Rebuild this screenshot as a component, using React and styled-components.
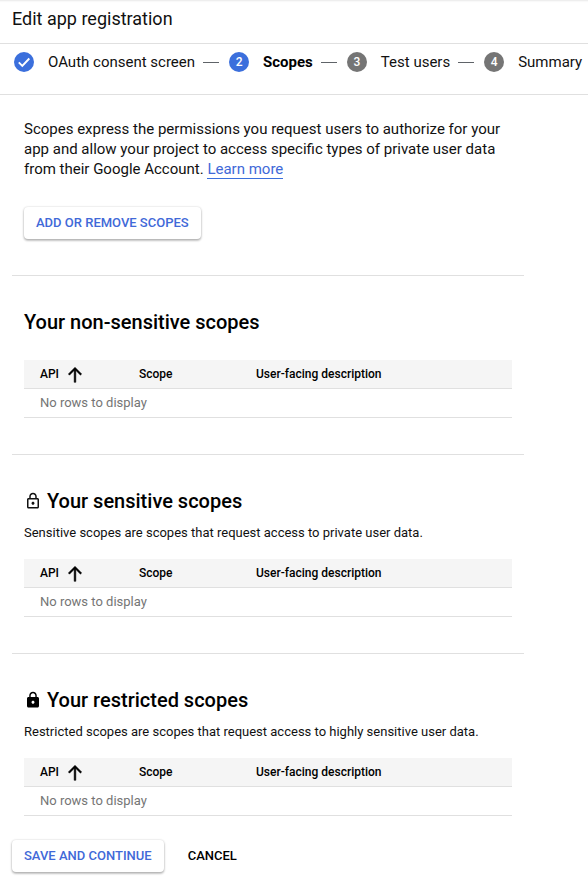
import React from 'react';
import styled, { createGlobalStyle } from 'styled-components';

const GlobalStyle = createGlobalStyle`
  html, body { margin: 0; padding: 0; background: #fff; }
  body { font-family: Roboto, "Liberation Sans", sans-serif; color: #111; }
`;

const Page = styled.div`
  width: 588px;
  height: 881px;
  overflow: hidden;
  background: #fff;
`;

const Header = styled.header`
  height: 44px;
  box-sizing: border-box;
  padding: 0 12px 6px;
  display: flex;
  align-items: center;
  border-bottom: 1px solid #e0e0e0;
  box-shadow: inset 0 3px 2px -2px #e8e8e8;
`;

const Title = styled.h1`
  margin: 0;
  font-size: 18px;
  font-weight: 400;
  color: #111;
`;

const Stepper = styled.nav`
  height: 51px;
  box-sizing: border-box;
  padding: 8px 0 0 14px;
  display: flex;
  align-items: flex-start;
  border-bottom: 1px solid #e0e0e0;
  white-space: nowrap;
`;

const StepCircle = styled.span`
  flex: none;
  width: 20px;
  height: 20px;
  border-radius: 50%;
  background: ${p => (p.$active ? '#3b6fdc' : '#757575')};
  color: #fff;
  font-size: 12px;
  font-weight: 500;
  display: flex;
  align-items: center;
  justify-content: center;
`;

const StepLabel = styled.span`
  margin-left: 14px;
  font-size: 15px;
  line-height: 20px;
  font-weight: ${p => (p.$active ? 700 : 400)};
  color: ${p => (p.$active ? '#000' : '#111')};
`;

const StepDash = styled.span`
  flex: none;
  width: 16px;
  height: 1px;
  margin: 10px 10px 0 8px;
  background: #5f6368;
`;

const Main = styled.main`
  width: 536px;
  box-sizing: border-box;
  padding: 24px 12px 0;
`;

const Intro = styled.p`
  margin: 0 12px 28px;
  width: 484px;
  font-size: 15px;
  line-height: 20px;
  color: #111;
`;

const Link = styled.a`
  color: #4169d8;
  text-decoration: none;
  border-bottom: 1px solid #3b6fdc;
`;

const RaisedButton = styled.button`
  display: block;
  height: 32px;
  margin-left: ${p => p.$inset || 0}px;
  padding: 0 12px 2px;
  border: 0;
  border-radius: 4px;
  background: #fff;
  color: #4169d8;
  font-family: inherit;
  font-size: 13px;
  font-weight: 500;
  text-transform: uppercase;
  box-shadow: 0 1px 3px rgba(0, 0, 0, 0.2), 0 2px 2px rgba(0, 0, 0, 0.14), 0 0 2px rgba(0, 0, 0, 0.12);
`;

const Divider = styled.hr`
  margin: ${p => p.$top}px 0 0;
  border: 0;
  border-top: 1px solid #e0e0e0;
`;

const Section = styled.section`
  padding: ${p => p.$top}px 12px 0;
`;

const Heading = styled.h2`
  margin: 0;
  height: 24px;
  display: flex;
  align-items: center;
  gap: 5px;
  font-size: 20px;
  line-height: 24px;
  font-weight: 500;
  color: #000;
`;

const Note = styled.p`
  margin: 10px 0 0;
  font-size: 13px;
  line-height: 20px;
  color: #111;
`;

const Table = styled.div`
  margin-top: ${p => p.$top}px;
  border-bottom: 1px solid #e0e0e0;
`;

const HeadRow = styled.div`
  height: 29px;
  padding-bottom: 1px;
  display: grid;
  grid-template-columns: 99px 117px 1fr;
  align-items: center;
  background: #f5f5f5;
  border-bottom: 1px solid #e0e0e0;
  box-sizing: border-box;
`;

const HeadCell = styled.div`
  padding-left: 16px;
  display: flex;
  align-items: center;
  gap: 6px;
  font-size: 12px;
  font-weight: 500;
  color: #000;
`;

const EmptyRow = styled.div`
  height: 28px;
  box-sizing: border-box;
  padding: 0 16px 2px;
  display: flex;
  align-items: center;
  font-size: 13px;
  color: #757575;
`;

const Actions = styled.div`
  margin-top: 24px;
  display: flex;
  align-items: center;
`;

const TextButton = styled.button`
  height: 32px;
  margin-left: 12px;
  padding: 0 12px 2px;
  border: 0;
  background: none;
  color: #000;
  font-family: inherit;
  font-size: 13px;
  font-weight: 500;
  text-transform: uppercase;
`;

const CheckIcon = () => (
  <svg width="20" height="20" viewBox="0 0 20 20" style={{ flex: 'none' }}>
    <circle cx="10" cy="10" r="10" fill="#3b6fdc" />
    <path d="M4.8 10.4l3.5 3.5 7-7.4" fill="none" stroke="#fff" strokeWidth="1.9" />
  </svg>
);

const ArrowUp = () => (
  <svg width="20" height="20" viewBox="0 0 24 24" fill="#000" stroke="#000" strokeWidth="0.6">
    <path d="M4 12l1.41 1.41L11 7.83V22h2V7.83l5.58 5.59L20 12l-8-8-8 8z" />
  </svg>
);

const LockOutline = () => (
  <svg width="18" height="18" viewBox="0 0 24 24" fill="#111">
    <path d="M18 8h-1V6c0-2.76-2.24-5-5-5S7 3.24 7 6v2H6c-1.1 0-2 .9-2 2v10c0 1.1.9 2 2 2h12c1.1 0 2-.9 2-2V10c0-1.1-.9-2-2-2zM9 6c0-1.66 1.34-3 3-3s3 1.34 3 3v2H9V6zm9 14H6V10h12v10zm-6-3c1.1 0 2-.9 2-2s-.9-2-2-2-2 .9-2 2 .9 2 2 2z" />
  </svg>
);

const LockFilled = () => (
  <svg width="18" height="18" viewBox="0 0 24 24" fill="#000">
    <path d="M18 8h-1V6c0-2.76-2.24-5-5-5S7 3.24 7 6v2H6c-1.1 0-2 .9-2 2v10c0 1.1.9 2 2 2h12c1.1 0 2-.9 2-2V10c0-1.1-.9-2-2-2zm-6 9c-1.1 0-2-.9-2-2s.9-2 2-2 2 .9 2 2-.9 2-2 2zm3.1-9H8.9V6c0-1.71 1.39-3.1 3.1-3.1s3.1 1.39 3.1 3.1v2z" />
  </svg>
);

const ScopeTable = ({ top }) => (
  <Table $top={top}>
    <HeadRow>
      <HeadCell>API <ArrowUp /></HeadCell>
      <HeadCell>Scope</HeadCell>
      <HeadCell>User-facing description</HeadCell>
    </HeadRow>
    <EmptyRow>No rows to display</EmptyRow>
  </Table>
);

export default function App() {
  return (
    <Page>
      <GlobalStyle />
      <Header>
        <Title>Edit app registration</Title>
      </Header>
      <Stepper>
        <CheckIcon />
        <StepLabel>OAuth consent screen</StepLabel>
        <StepDash />
        <StepCircle $active>2</StepCircle>
        <StepLabel $active>Scopes</StepLabel>
        <StepDash />
        <StepCircle>3</StepCircle>
        <StepLabel>Test users</StepLabel>
        <StepDash />
        <StepCircle>4</StepCircle>
        <StepLabel>Summary</StepLabel>
      </Stepper>
      <Main>
        <Intro>
          Scopes express the permissions you request users to authorize for your app and allow your
          project to access specific types of private user data from their Google Account.{' '}
          <Link>Learn more</Link>
        </Intro>
        <RaisedButton $inset={12}>Add or remove scopes</RaisedButton>
        <Divider $top={36} />
        <Section $top={34}>
          <Heading>Your non-sensitive scopes</Heading>
          <ScopeTable top={26} />
        </Section>
        <Divider $top={36} />
        <Section $top={34}>
          <Heading><LockOutline />Your sensitive scopes</Heading>
          <Note>Sensitive scopes are scopes that request access to private user data.</Note>
          <ScopeTable top={16} />
        </Section>
        <Divider $top={36} />
        <Section $top={34}>
          <Heading><LockFilled />Your restricted scopes</Heading>
          <Note>Restricted scopes are scopes that request access to highly sensitive user data.</Note>
          <ScopeTable top={16} />
        </Section>
        <Actions>
          <RaisedButton>Save and continue</RaisedButton>
          <TextButton>Cancel</TextButton>
        </Actions>
      </Main>
    </Page>
  );
}
